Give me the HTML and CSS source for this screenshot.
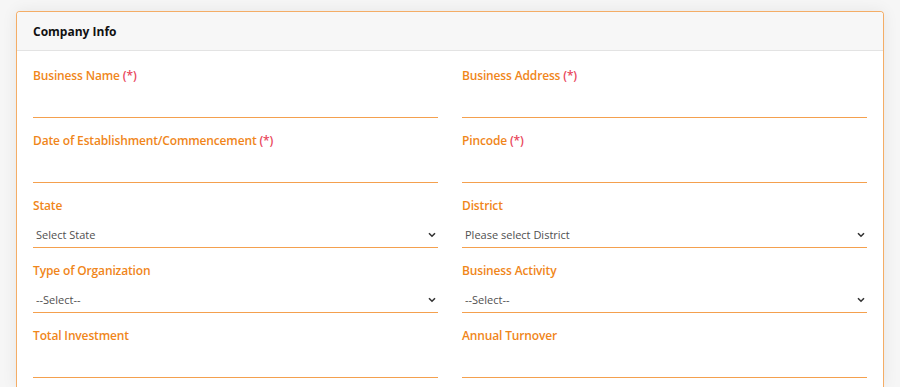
FILE: index.html
```html
<!DOCTYPE html>
<html lang="en">
<head>
    <meta charset="UTF-8">
    <meta name="viewport" content="width=device-width, initial-scale=1.0">
    <title>Company Info</title>
    <link rel="stylesheet" href="styles.css">
</head>
<body>
    <div class="card">
        <div class="card-header">Company Info</div>

        <div class="card-body">
            <div class="field">
                <label>Business Name <span class="req">(*)</span></label>
                <input type="text" class="input">
            </div>
            <div class="field">
                <label>Business Address <span class="req">(*)</span></label>
                <input type="text" class="input">
            </div>

            <div class="field">
                <label>Date of Establishment/Commencement <span class="req">(*)</span></label>
                <input type="text" class="input">
            </div>
            <div class="field">
                <label>Pincode <span class="req">(*)</span></label>
                <input type="text" class="input">
            </div>

            <div class="field">
                <label>State</label>
                <div class="select-wrap">
                    <select class="input select">
                        <option>Select State</option>
                    </select>
                    <span class="chevron"><svg width="8" height="6" viewBox="0 0 8 6"><path d="M1 1.2 4 4.2 7 1.2" fill="none" stroke="#333" stroke-width="1.6"/></svg></span>
                </div>
            </div>
            <div class="field">
                <label>District</label>
                <div class="select-wrap">
                    <select class="input select">
                        <option>Please select District</option>
                    </select>
                    <span class="chevron"><svg width="8" height="6" viewBox="0 0 8 6"><path d="M1 1.2 4 4.2 7 1.2" fill="none" stroke="#333" stroke-width="1.6"/></svg></span>
                </div>
            </div>

            <div class="field">
                <label>Type of Organization</label>
                <div class="select-wrap">
                    <select class="input select">
                        <option>--Select--</option>
                    </select>
                    <span class="chevron"><svg width="8" height="6" viewBox="0 0 8 6"><path d="M1 1.2 4 4.2 7 1.2" fill="none" stroke="#333" stroke-width="1.6"/></svg></span>
                </div>
            </div>
            <div class="field">
                <label>Business Activity</label>
                <div class="select-wrap">
                    <select class="input select">
                        <option>--Select--</option>
                    </select>
                    <span class="chevron"><svg width="8" height="6" viewBox="0 0 8 6"><path d="M1 1.2 4 4.2 7 1.2" fill="none" stroke="#333" stroke-width="1.6"/></svg></span>
                </div>
            </div>

            <div class="field">
                <label>Total Investment</label>
                <input type="text" class="input">
            </div>
            <div class="field">
                <label>Annual Turnover</label>
                <input type="text" class="input">
            </div>
        </div>
    </div>
</body>
</html>
```

FILE: styles.css
```css
* {
    margin: 0;
    padding: 0;
    box-sizing: border-box;
}
body {
    background: #f6f6f6;
    font-family: 'Open Sans', 'Noto Sans', sans-serif;
    padding: 11px 16px 0;
}
.card {
    background: #ffffff;
    border: 1px solid #f4ad66;
    border-bottom: none;
    border-radius: 4px 4px 0 0;
    box-shadow: 0 0 16px rgba(0, 0, 0, 0.07);
    overflow: hidden;
}
.card-header {
    background: #f7f7f7;
    border-bottom: 1px solid #e3e3e3;
    height: 39px;
    padding: 0 16px;
    display: flex;
    align-items: center;
    font-size: 12px;
    font-weight: 700;
    color: #111111;
}
.card-body {
    display: grid;
    grid-template-columns: 1fr 1fr;
    column-gap: 24px;
    row-gap: 14px;
    padding: 16px 16px 9px;
}
.field label {
    display: block;
    font-size: 12px;
    font-weight: 600;
    letter-spacing: -0.15px;
    line-height: 18px;
    color: #f0861a;
}
.req {
    color: #e9475c;
}
.input {
    display: block;
    width: 100%;
    height: 33px;
    border: none;
    border-bottom: 1px solid #f4a04e;
    background: transparent;
    outline: none;
    font-family: inherit;
}
.select-wrap {
    position: relative;
}
.select {
    appearance: none;
    -webkit-appearance: none;
    font-size: 11px;
    color: #505050;
    padding: 6px 0 0 3px;
}
.chevron {
    position: absolute;
    right: 2px;
    top: 17px;
    line-height: 0;
}
```
